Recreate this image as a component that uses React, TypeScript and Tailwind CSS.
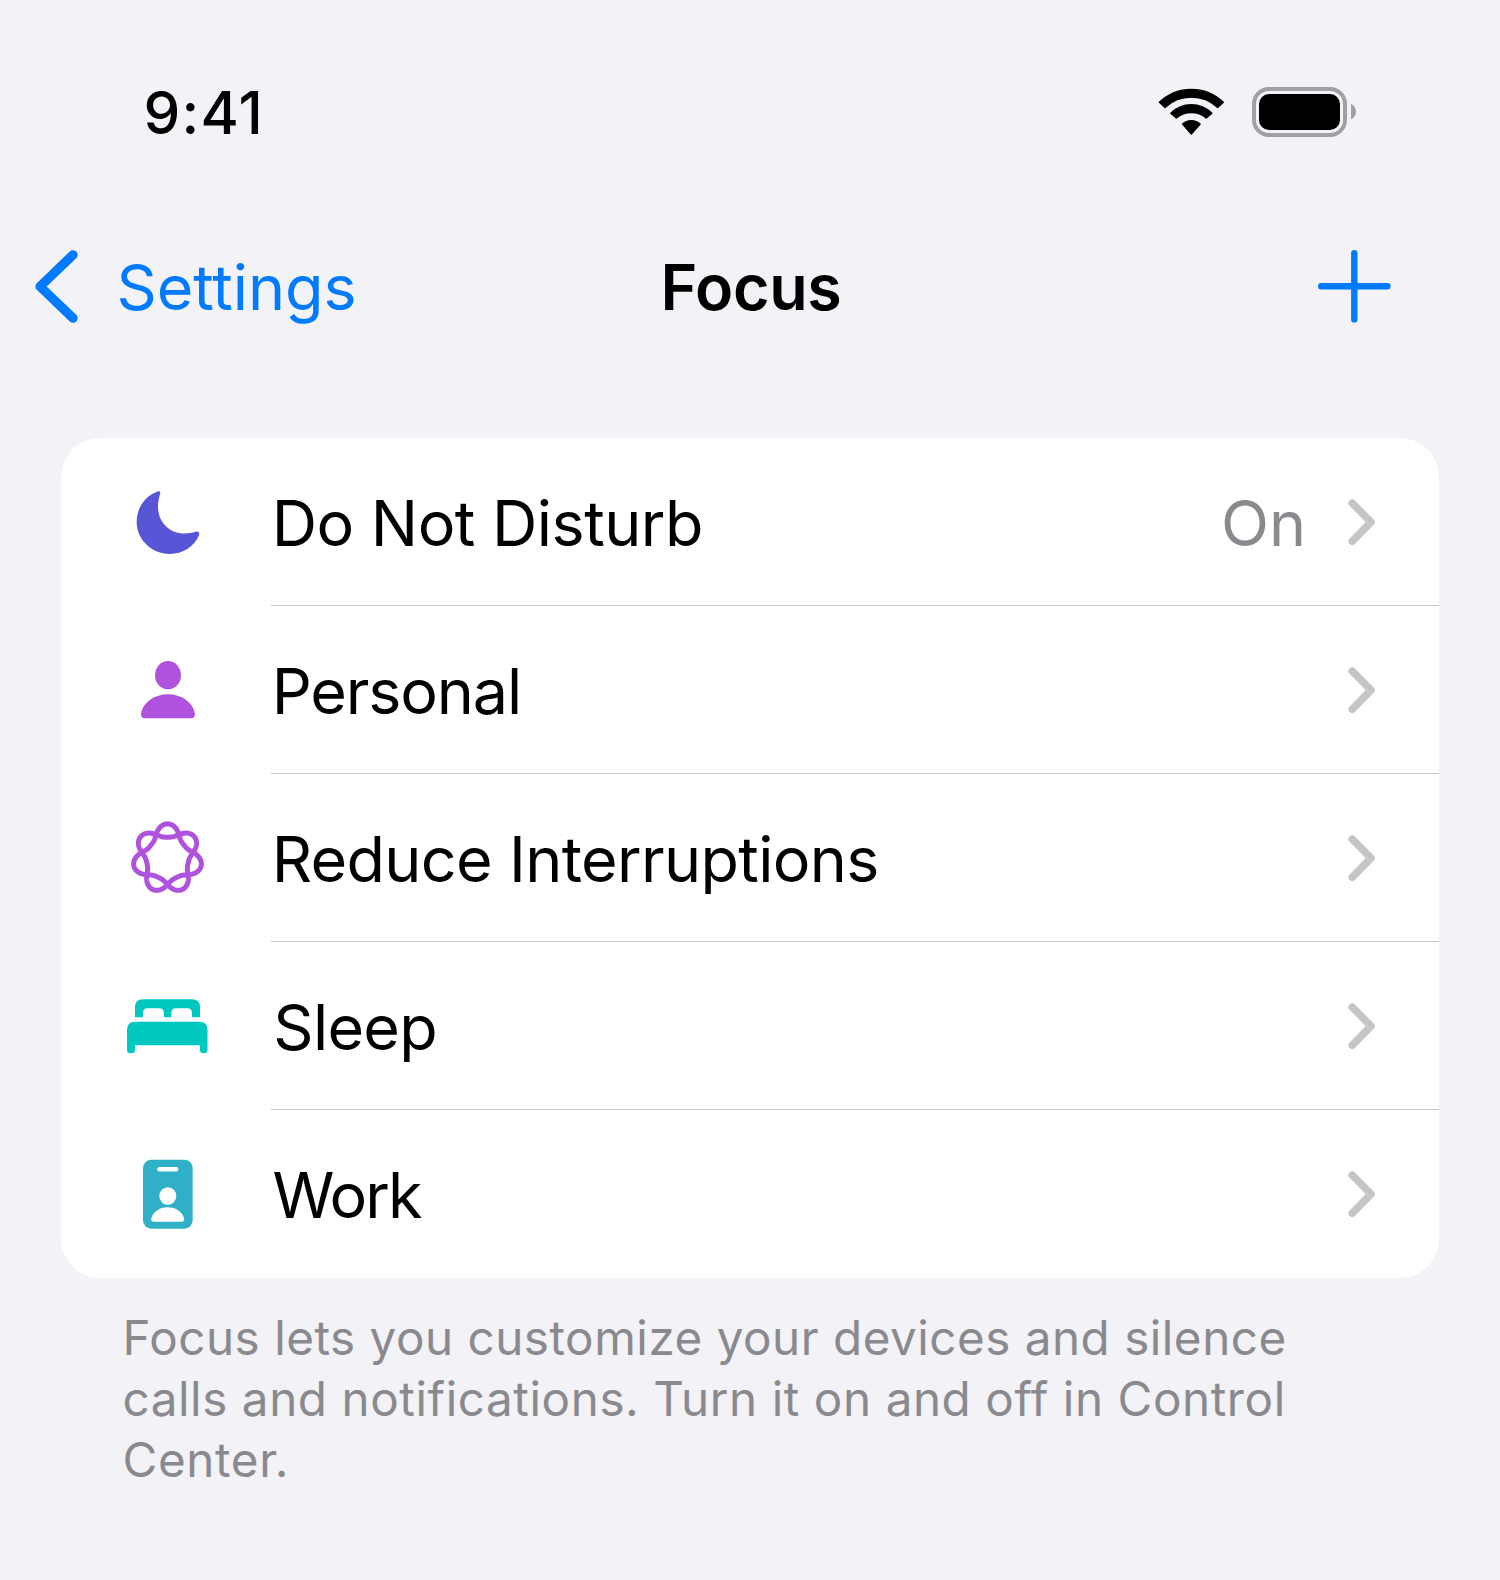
import React from "react";

/* ---------- Status bar ---------- */

function WifiIcon() {
  return (
    <svg viewBox="48 48 216 156" className="h-[52px] w-[72px]" fill="#000" stroke="#000" strokeWidth="4" strokeLinejoin="round">
      <path d="M58 97 A138 138 0 0 1 250 97 L233 112.500 A116 116 0 0 0 75 112.500 Z" />
      <path d="M92.500 129.500 A87 87 0 0 1 215.500 129.500 L199 144 A71 71 0 0 0 109 144 Z" />
      <path d="M127.500 162.500 A38 38 0 0 1 180.500 162.500 L154 192.500 Z" />
    </svg>
  );
}

function BatteryIcon() {
  return (
    <div className="flex items-center">
      <div className="h-[50px] w-[95px] rounded-[17px] border-4 border-[#a0a0a3] p-[3px]">
        <div className="h-full w-full rounded-[10px] bg-black" />
      </div>
      <svg viewBox="0 0 15 46" className="ml-[4px] h-[15.300px] w-[5px]">
        <path d="M0 0 C9 4 15 13 15 23 C15 33 9 42 0 46 Z" fill="#a0a0a3" />
      </svg>
    </div>
  );
}

function StatusBar() {
  return (
    <div className="flex h-[225px] items-center justify-between pl-[143.500px] pr-[144px]">
      <span className="pt-[1px] text-[58.400px] leading-none font-medium tracking-[1.250px]">9:41</span>
      <div className="mt-[-2px] flex items-center gap-[24px]">
        <WifiIcon />
        <BatteryIcon />
      </div>
    </div>
  );
}

/* ---------- Navigation bar ---------- */

function NavBar() {
  return (
    <div className="grid h-[124px] grid-cols-[1fr_auto_1fr] items-center text-[62.800px] leading-none">
      <div className="flex items-center pl-[35px] text-[#007aff]">
        <svg viewBox="45 58 132 222" className="mt-[-1.500px] h-[74px] w-[44px]" fill="none" stroke="currentColor" strokeWidth="28" strokeLinecap="round" strokeLinejoin="round">
          <path d="M159 75.500 L60 170.500 L159 265.500" />
        </svg>
        <span className="ml-[37.500px] tracking-[-0.050px]">Settings</span>
      </div>
      <h1 className="pl-[2px] font-semibold tracking-[-0.320px]">Focus</h1>
      <div className="flex justify-end pr-[108.700px] text-[#007aff]">
        <svg viewBox="0 0 74 74" className="mt-[-2.500px] size-[74px]" fill="none" stroke="currentColor" strokeWidth="6.400" strokeLinecap="round">
          <path d="M37.300 4.200 V70.400 M4.200 37.300 H70.400" />
        </svg>
      </div>
    </div>
  );
}

/* ---------- List icons ---------- */

const iconBox = "size-[100px] shrink-0";

function MoonIcon() {
  return (
    <svg viewBox="0 5 300 300" className={iconBox} fill="#5856d6">
      <path d="M113 63.500 C119 61 122.500 65 120 72 C111 101 110 134 131 160 C153 188 190 196 227 184.500 C235 182 240 187 237 195 C222 230 188 251 150 251 C95 251 50 208 50 155 C50 113 74 78 113 63.500 Z" />
    </svg>
  );
}

function PersonIcon() {
  return (
    <svg viewBox="0 -0.500 300 300" className={iconBox} fill="#af52de">
      <ellipse cx="144" cy="105" rx="39" ry="42.500" />
      <path d="M77 234 C66 234 61 228 64 216 C71 186 103 162 144 162 C185 162 217 186 224 216 C227 228 222 234 211 234 Z" />
    </svg>
  );
}

function rosettePath(cx: number, cy: number) {
  const steps = 560;
  const points: string[] = [];
  for (let i = 0; i < steps; i++) {
    const t = (i / steps) * Math.PI * 4;
    const a = t + 0.03 * Math.sin(3.5 * t) + 0.016 * Math.sin(7 * t);
    const r = 80 + 20 * Math.cos(3.5 * t) + 3.5 * Math.cos(7 * t);
    points.push(`${(cx + r * Math.sin(a)).toFixed(2)} ${(cy - r * Math.cos(a)).toFixed(2)}`);
  }
  return `M${points.join("L")}Z`;
}

function RosetteIcon() {
  return (
    <svg viewBox="0 -7.500 300 300" className={iconBox} fill="none" stroke="#af52de" strokeWidth="15" strokeLinejoin="round">
      <path d={rosettePath(142.500, 143.500)} />
    </svg>
  );
}

function BedIcon() {
  return (
    <svg viewBox="30 -13 300 300" className={iconBox} fill="#00c8be">
      <path d="M75 111 V81 Q75 57 99 57 H246 Q270 57 270 81 V111 H246 V98 Q246 84 232 84 H198 Q184 84 184 98 V111 H161.500 V98 Q161.500 84 147.500 84 H113 Q99 84 99 98 V111 Z" />
      <path d="M51 149 Q51 124.500 76 124.500 H268 Q292.500 124.500 292.500 149 V208 Q292.500 218.500 282 218.500 H280 Q270 218.500 270 208 V195 H75 V208 Q75 218.500 65 218.500 H61 Q51 218.500 51 208 Z" />
    </svg>
  );
}

function BadgeIcon() {
  return (
    <svg viewBox="0 12 300 300" className={iconBox}>
      <rect x="69" y="59.500" width="149" height="206.500" rx="25" fill="#30b0c7" />
      <rect x="112" y="81" width="63" height="13.500" rx="6.500" fill="#fff" />
      <ellipse cx="143.500" cy="168" rx="25.500" ry="26.500" fill="#fff" />
      <path d="M101 245.500 C95 245.500 92.500 242 94 235 C99 216 118 202 143 202 C168 202 187 216 192 235 C193.500 242 191 245.500 185 245.500 Z" fill="#fff" />
    </svg>
  );
}

function Disclosure() {
  return (
    <svg viewBox="0 0 30 48" className="mt-[1px] h-[48px] w-[30px] shrink-0" fill="none" stroke="#c5c5c7" strokeWidth="7.600" strokeLinecap="round" strokeLinejoin="round">
      <path d="M5.300 5.200 L24 24.200 L5.300 43.200" />
    </svg>
  );
}

/* ---------- List ---------- */

type Row = {
  label: string;
  icon: React.ReactNode;
  labelClass: string;
  value?: string;
};

const rows: Row[] = [
  { label: "Do Not Disturb", icon: <MoonIcon />, labelClass: "pl-[0.700px] tracking-[-0.500px]", value: "On" },
  { label: "Personal", icon: <PersonIcon />, labelClass: "pl-[0.700px] tracking-[-1.130px]" },
  { label: "Reduce Interruptions", icon: <RosetteIcon />, labelClass: "pl-[0.700px] tracking-[-0.640px]" },
  { label: "Sleep", icon: <BedIcon />, labelClass: "pl-[2.300px] tracking-[-0.700px]" },
  { label: "Work", icon: <BadgeIcon />, labelClass: "pl-[1.500px] tracking-[-1.800px]" },
];

function FocusRow({ row, last }: { row: Row; last: boolean }) {
  return (
    <li className="flex h-[167.900px] items-center pl-[59px]">
      {row.icon}
      <div className={`ml-[51px] flex h-full flex-1 items-center pr-[61.500px] ${last ? "" : "border-b border-[#c6c6c8]"}`}>
        <span className={`flex-1 pt-[3.500px] leading-none ${row.labelClass}`}>{row.label}</span>
        {row.value && <span className="mr-[41px] pt-[3.500px] leading-none text-[#8a8a8e]">{row.value}</span>}
        <Disclosure />
      </div>
    </li>
  );
}

export default function App() {
  return (
    <div className="h-[1580px] w-[1500px] overflow-hidden bg-[#f2f2f7] font-['Inter','Liberation_Sans',sans-serif] text-black">
      <StatusBar />
      <NavBar />
      <ul className="mr-[61.500px] ml-[61px] mt-[89.300px] overflow-hidden rounded-[39px] bg-white text-[62.800px]">
        {rows.map((row, i) => (
          <FocusRow key={row.label} row={row} last={i === rows.length - 1} />
        ))}
      </ul>
      <p className="mt-[29px] pl-[122.500px] text-[47.600px] leading-[61px] whitespace-nowrap text-[#8a8a8e]">
        <span className="block tracking-[0.510px]">Focus lets you customize your devices and silence</span>
        <span className="block tracking-[0.570px]">calls and notifications. Turn it on and off in Control</span>
        <span className="block tracking-[0.630px]">Center.</span>
      </p>
    </div>
  );
}
